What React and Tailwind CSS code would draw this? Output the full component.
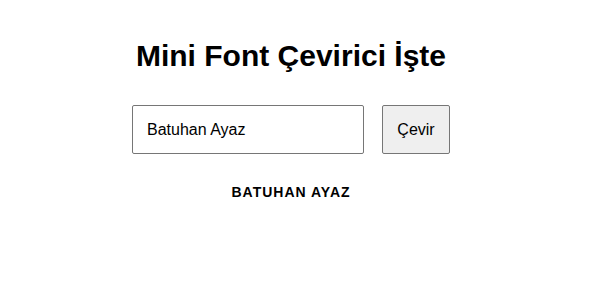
import React, { useState } from 'react';

export default function App() {
  const [name, setName] = useState('Batuhan Ayaz');
  const [result, setResult] = useState('BATUHAN AYAZ');

  return (
    <div className="w-[582px] h-[291px] bg-white font-['Liberation_Sans',Arial,sans-serif] text-black">
      <div className="flex flex-col items-center pt-[38px]">
        <h1 className="text-[30px] font-bold leading-[36px]">Mini Font Çevirici İşte</h1>
        <div className="flex items-center gap-[18px] mt-[31px]">
          <input
            value={name}
            onChange={(e) => setName(e.target.value)}
            className="w-[232px] h-[49px] border border-[#767676] rounded-[2px] px-[14px] text-[16px] outline-none"
          />
          <button
            onClick={() => setResult(name.toUpperCase())}
            className="w-[68px] h-[49px] border border-[#767676] rounded-[2px] bg-[#efefef] text-[16px]"
          >
            Çevir
          </button>
        </div>
        <div className="mt-[30px] text-[14px] leading-[16px] font-bold tracking-[1px]">{result}</div>
      </div>
    </div>
  );
}
